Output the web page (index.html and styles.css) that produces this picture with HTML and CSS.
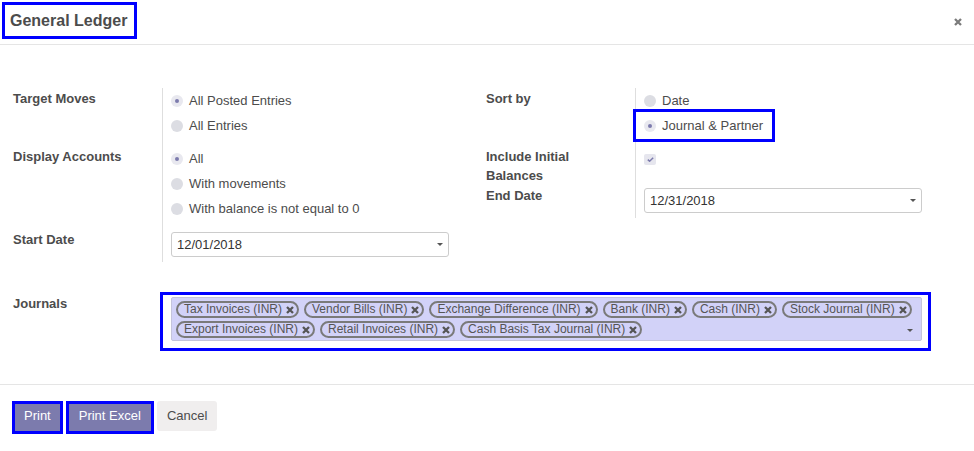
FILE: index.html
```html
<!DOCTYPE html>
<html lang="en">
<head>
<meta charset="utf-8">
<title>General Ledger</title>
<link rel="stylesheet" href="styles.css">
</head>
<body>
<div class="dialog">
  <header class="dlg-header">
    <h4 class="title">General Ledger</h4>
    <span class="close"><svg width="8" height="8" viewBox="0 0 8 8"><path d="M1 1L7 7M7 1L1 7" stroke="#7b7b7b" stroke-width="2.3"/></svg></span>
  </header>
  <main class="dlg-body">
    <div class="groups">
      <div class="group">
        <div class="lbl">Target Moves</div>
        <div class="fld fld-radio">
          <div class="radio"><span class="rb on"></span>All Posted Entries</div>
          <div class="radio"><span class="rb"></span>All Entries</div>
        </div>
        <div class="lbl">Display Accounts</div>
        <div class="fld fld-radio">
          <div class="radio"><span class="rb on"></span>All</div>
          <div class="radio"><span class="rb"></span>With movements</div>
          <div class="radio"><span class="rb"></span>With balance is not equal to 0</div>
        </div>
        <div class="lbl">Start Date</div>
        <div class="fld fld-date">
          <div class="date"><span>12/01/2018</span><span class="caret"></span></div>
        </div>
      </div>
      <div class="group">
        <div class="lbl">Sort by</div>
        <div class="fld fld-radio">
          <div class="radio"><span class="rb"></span>Date</div>
          <div class="radio hl-radio"><span class="rb on"></span>Journal &amp; Partner</div>
        </div>
        <div class="lbl">Include Initial Balances</div>
        <div class="fld">
          <span class="cb"><svg width="7" height="5" viewBox="0 0 7 5"><path d="M0.8 2.6L2.6 4.2L6.2 0.8" fill="none" stroke="#7c7bad" stroke-width="1.5"/></svg></span>
        </div>
        <div class="lbl">End Date</div>
        <div class="fld fld-date">
          <div class="date"><span>12/31/2018</span><span class="caret"></span></div>
        </div>
      </div>
    </div>
    <div class="journals">
      <div class="lbl jl">Journals</div>
      <div class="hl-box">
        <div class="tags">
          <span class="tag">Tax Invoices (INR)<svg class="x" width="8" height="8" viewBox="0 0 8 8"><path d="M1 1L7 7M7 1L1 7"/></svg></span>
          <span class="tag">Vendor Bills (INR)<svg class="x" width="8" height="8" viewBox="0 0 8 8"><path d="M1 1L7 7M7 1L1 7"/></svg></span>
          <span class="tag">Exchange Difference (INR)<svg class="x" width="8" height="8" viewBox="0 0 8 8"><path d="M1 1L7 7M7 1L1 7"/></svg></span>
          <span class="tag">Bank (INR)<svg class="x" width="8" height="8" viewBox="0 0 8 8"><path d="M1 1L7 7M7 1L1 7"/></svg></span>
          <span class="tag">Cash (INR)<svg class="x" width="8" height="8" viewBox="0 0 8 8"><path d="M1 1L7 7M7 1L1 7"/></svg></span>
          <span class="tag">Stock Journal (INR)<svg class="x" width="8" height="8" viewBox="0 0 8 8"><path d="M1 1L7 7M7 1L1 7"/></svg></span>
          <span class="tag">Export Invoices (INR)<svg class="x" width="8" height="8" viewBox="0 0 8 8"><path d="M1 1L7 7M7 1L1 7"/></svg></span>
          <span class="tag">Retail Invoices (INR)<svg class="x" width="8" height="8" viewBox="0 0 8 8"><path d="M1 1L7 7M7 1L1 7"/></svg></span>
          <span class="tag">Cash Basis Tax Journal (INR)<svg class="x" width="8" height="8" viewBox="0 0 8 8"><path d="M1 1L7 7M7 1L1 7"/></svg></span>
          <span class="caret tags-caret"></span>
        </div>
      </div>
    </div>
  </main>
  <footer class="dlg-footer">
    <button class="btn btn-primary btn-print">Print</button>
    <button class="btn btn-primary">Print Excel</button>
    <button class="btn btn-secondary">Cancel</button>
  </footer>
</div>
</body>
</html>
```
FILE: styles.css
```css
* { box-sizing: border-box; }
html, body { margin: 0; background: #fff; }
body {
  font-family: "Liberation Sans", Arial, sans-serif;
  font-size: 13px;
  color: #4c4c4c;
  width: 974px;
  height: 451px;
  overflow: hidden;
}
.dlg-header {
  height: 45px;
  border-bottom: 1px solid #e5e5e5;
  display: flex;
  justify-content: space-between;
  align-items: flex-start;
  padding: 2px 12px 0 2px;
}
.title {
  margin: 0;
  font-size: 16px;
  font-weight: bold;
  line-height: 31px;
  border: 3px solid #0000ff;
  padding: 0 7px 0 5px;
  color: #4c4c4c;
}
.close { margin-top: 16px; display: flex; }

.dlg-body { padding: 43px 0 0 13px; }
.groups { display: flex; gap: 37px; }
.group { display: grid; grid-template-columns: 149px 287px; align-content: start; }
.lbl {
  font-weight: bold;
  line-height: 19px;
  padding: 1px 8px 0 0;
  color: #4c4c4c;
}
.fld { border-left: 1px solid #dedede; padding-left: 8px; }
.fld-radio { padding-bottom: 8px; }
.fld-date { padding-bottom: 5px; }
.radio { display: flex; align-items: center; height: 25px; }
.rb {
  width: 12px; height: 12px; border-radius: 50%;
  background: #dcdde3;
  margin-right: 6px;
  display: flex; align-items: center; justify-content: center;
}
.rb.on { background: #e8e8ef; }
.rb.on::after {
  content: ""; width: 4px; height: 4px; border-radius: 50%; background: #7c7bad;
}
.hl-radio {
  margin: -4px 0 -4px -11px;
  border: 3px solid #0000ff;
  height: 33px;
  padding: 0 9px 0 8px;
  width: fit-content;
}
.cb {
  margin-top: 8px;
  width: 12px; height: 11px;
  border-radius: 2px;
  background: #e6e6ee;
  display: flex; align-items: center; justify-content: center;
}
.date {
  margin-top: 3px;
  height: 25px;
  border: 1px solid #ccc;
  border-radius: 3px;
  display: flex; align-items: center; justify-content: space-between;
  padding: 0 5px;
  color: #333;
}
.caret {
  width: 0; height: 0;
  border-left: 3px solid transparent;
  border-right: 3px solid transparent;
  border-top: 3px solid #555;
}

.journals { display: flex; margin-top: 30px; }
.jl { width: 147px; padding-top: 2px; }
.hl-box {
  border: 3px solid #0000ff;
  padding: 2px 6px 7px 8px;
  width: 771px;
}
.tags {
  position: relative;
  background: #d2d2f8;
  border: 1px solid #c4c4dc;
  border-radius: 2px;
  padding: 3px 0 2px 4px;
  display: flex; flex-wrap: wrap;
  column-gap: 5px; row-gap: 3px;
}
.tag {
  display: inline-flex; align-items: center;
  height: 17px;
  border: 2px solid #7a7a7a;
  border-radius: 9px;
  padding: 0 3px 0 6px;
  font-size: 12px;
  line-height: 13px;
  color: #555;
}
.tag .x { margin-left: 4px; stroke: #555; stroke-width: 2.3; }
.tags-caret { position: absolute; right: 8px; bottom: 8px; }

.dlg-footer {
  margin-top: 33px;
  border-top: 1px solid #e5e5e5;
  padding: 16px 12px 0;
  display: flex; gap: 3px; align-items: flex-start;
}
.btn {
  font-family: inherit;
  font-size: 13px;
  height: 30px;
  line-height: 30px;
  padding: 0 10px;
  border: 0;
  border-radius: 3px;
  margin: 0;
  text-align: center;
}
.btn-primary {
  background: #7c7bad;
  color: #fff;
  border: 3px solid #0000ff;
  border-radius: 0;
  height: 33px;
  line-height: 24px;
  padding-bottom: 3px;
}
.btn-print { padding-left: 9px; padding-right: 9px; }
.btn-secondary { background: #f0eeee; color: #4c4c4c; }
```
